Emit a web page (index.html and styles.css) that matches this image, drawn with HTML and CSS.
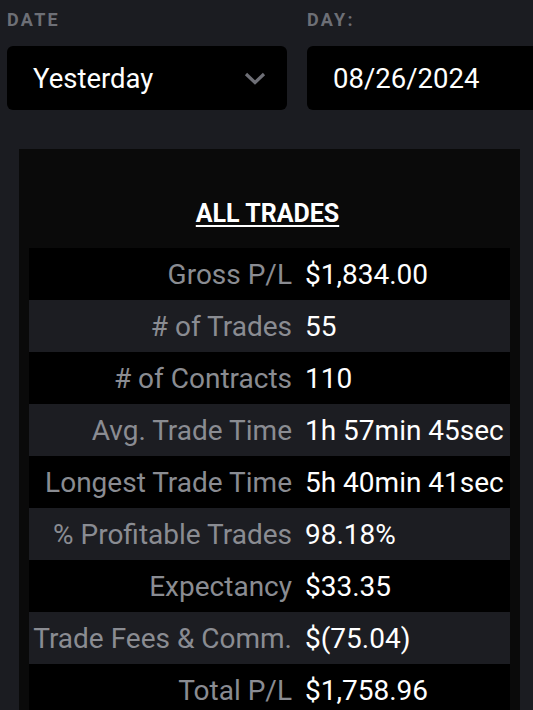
FILE: index.html
```html
<!DOCTYPE html>
<html>
<head>
<meta charset="utf-8">
<link rel="stylesheet" href="styles.css">
</head>
<body>
<div class="filters">
  <div class="field">
    <div class="label">DATE</div>
    <div class="box select">
      <span>Yesterday</span>
      <svg class="chev" width="22" height="13" viewBox="0 0 22 13"><path d="M2 2 L11 10.5 L20 2" fill="none" stroke="#6e6f76" stroke-width="3.2"/></svg>
    </div>
  </div>
  <div class="field">
    <div class="label">DAY:</div>
    <div class="box input"><span>08/26/2024</span></div>
  </div>
</div>
<div class="panel">
  <h2 class="title">ALL TRADES</h2>
  <div class="stats">
    <div class="row"><div class="k">Gross P/L</div><div class="v">$1,834.00</div></div>
    <div class="row"><div class="k"># of Trades</div><div class="v">55</div></div>
    <div class="row"><div class="k"># of Contracts</div><div class="v">110</div></div>
    <div class="row"><div class="k">Avg. Trade Time</div><div class="v">1h 57min 45sec</div></div>
    <div class="row"><div class="k">Longest Trade Time</div><div class="v">5h 40min 41sec</div></div>
    <div class="row"><div class="k">% Profitable Trades</div><div class="v">98.18%</div></div>
    <div class="row"><div class="k">Expectancy</div><div class="v">$33.35</div></div>
    <div class="row"><div class="k">Trade Fees &amp; Comm.</div><div class="v">$(75.04)</div></div>
    <div class="row"><div class="k">Total P/L</div><div class="v">$1,758.96</div></div>
  </div>
</div>
</body>
</html>
```
FILE: styles.css
```css
html, body {
  margin: 0;
  padding: 0;
  overflow: hidden;
  background: #1b1c21;
  font-family: Roboto, "Liberation Sans", sans-serif;
}
.filters {
  display: grid;
  grid-template-columns: 280px 280px;
  column-gap: 20px;
  padding: 10px 0 0 7px;
}
.label {
  color: #6d6f76;
  font-weight: 700;
  font-size: 18px;
  letter-spacing: 2.3px;
  line-height: 20px;
  height: 20px;
}
.box {
  margin-top: 16px;
  height: 64px;
  background: #000;
  border-radius: 6px;
  display: flex;
  align-items: center;
  color: #fff;
  font-size: 27.5px;
}
.select {
  padding: 0 21px 0 26px;
  justify-content: space-between;
}
.input {
  padding-left: 26px;
}
.panel {
  margin: 39px 0 0 19px;
  width: 501px;
  background: #0a0a0a;
  padding: 0 10px;
  box-sizing: border-box;
  height: 700px;
}
.title {
  margin: 0;
  padding: 51px 4px 0 0;
  height: 99px;
  box-sizing: border-box;
  text-align: center;
  color: #fff;
  font-size: 25px;
  font-weight: 700;
  text-decoration: underline;
  text-decoration-thickness: 2px;
  text-underline-offset: 3px;
  line-height: 28px;
}
.row {
  display: grid;
  grid-template-columns: 263px 1fr;
  height: 52px;
  align-items: center;
  font-size: 28px;
}
.row:nth-child(odd) { background: #000; }
.row:nth-child(even) { background: #1c1d22; }
.k {
  text-align: right;
  color: #8a8c92;
}
.v {
  color: #fff;
  padding-left: 13px;
  white-space: nowrap;
}
```
